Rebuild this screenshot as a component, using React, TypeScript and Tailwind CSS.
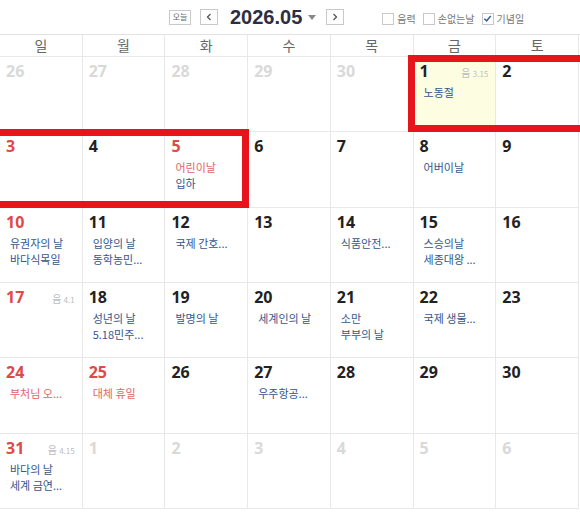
import React from 'react';

type Ev = { t: string; red?: boolean };
type Cell = {
  d: number;
  other?: boolean;
  red?: boolean;
  lunar?: string;
  today?: boolean;
  events?: Ev[];
};

const DAYS = ['일', '월', '화', '수', '목', '금', '토'];

const WEEKS: Cell[][] = [
  [
    { d: 26, other: true },
    { d: 27, other: true },
    { d: 28, other: true },
    { d: 29, other: true },
    { d: 30, other: true },
    { d: 1, lunar: '3.15', today: true, events: [{ t: '노동절' }] },
    { d: 2 },
  ],
  [
    { d: 3, red: true },
    { d: 4 },
    { d: 5, red: true, events: [{ t: '어린이날', red: true }, { t: '입하' }] },
    { d: 6 },
    { d: 7 },
    { d: 8, events: [{ t: '어버이날' }] },
    { d: 9 },
  ],
  [
    { d: 10, red: true, events: [{ t: '유권자의 날' }, { t: '바다식목일' }] },
    { d: 11, events: [{ t: '입양의 날' }, { t: '동학농민...' }] },
    { d: 12, events: [{ t: '국제 간호...' }] },
    { d: 13 },
    { d: 14, events: [{ t: '식품안전...' }] },
    { d: 15, events: [{ t: '스승의날' }, { t: '세종대왕 ...' }] },
    { d: 16 },
  ],
  [
    { d: 17, red: true, lunar: '4.1' },
    { d: 18, events: [{ t: '성년의 날' }, { t: '5.18민주...' }] },
    { d: 19, events: [{ t: '발명의 날' }] },
    { d: 20, events: [{ t: '세계인의 날' }] },
    { d: 21, events: [{ t: '소만' }, { t: '부부의 날' }] },
    { d: 22, events: [{ t: '국제 생물...' }] },
    { d: 23 },
  ],
  [
    { d: 24, red: true, events: [{ t: '부처님 오...', red: true }] },
    { d: 25, red: true, events: [{ t: '대체 휴일', red: true }] },
    { d: 26 },
    { d: 27, events: [{ t: '우주항공...' }] },
    { d: 28 },
    { d: 29 },
    { d: 30 },
  ],
  [
    { d: 31, red: true, lunar: '4.15', events: [{ t: '바다의 날' }, { t: '세계 금연...' }] },
    { d: 1, other: true },
    { d: 2, other: true },
    { d: 3, other: true },
    { d: 4, other: true },
    { d: 5, other: true },
    { d: 6, other: true },
  ],
];

function Check({ checked, label }: { checked?: boolean; label: string }) {
  return (
    <label className="flex items-center gap-[3px] text-[10px] text-[#777]">
      <span className="w-[12px] h-[12px] border border-[#c8c8c8] bg-white flex items-center justify-center">
        {checked && (
          <svg width="9" height="9" viewBox="0 0 10 10">
            <path d="M1.5 5.2 L4 7.6 L8.6 2.2" fill="none" stroke="#2f5f9e" strokeWidth="1.6" />
          </svg>
        )}
      </span>
      {label}
    </label>
  );
}

function DayCell({ c }: { c: Cell }) {
  const numColor = c.other ? 'text-[#d9d9d9]' : c.red ? 'text-[#dd4a4a]' : 'text-[#222]';
  return (
    <div
      className={`border-r border-b border-[#e8e8e8] px-[6px] pt-[3px] overflow-hidden ${
        c.today ? 'bg-[#fdfde2]' : 'bg-white'
      }`}
    >
      <div className="flex items-baseline justify-between">
        <span className={`text-[16px] leading-[22px] font-bold font-['Noto_Sans',sans-serif] ${numColor}`}>
          {c.d}
        </span>
        {c.lunar && (
          <span className="text-[#bdbdbd] text-[10px] pr-[1px]">
            음 <span className="text-[8px]">{c.lunar}</span>
          </span>
        )}
      </div>
      <div className="pl-[4px] mt-[2px]">
        {c.events?.map((e, i) => (
          <div
            key={i}
            className={`text-[11px] leading-[16px] whitespace-nowrap ${
              e.red ? 'text-[#e06464]' : 'text-[#34568c]'
            }`}
          >
            {e.t}
          </div>
        ))}
      </div>
    </div>
  );
}

export default function App() {
  return (
    <div className="relative w-[580px] h-[512px] overflow-hidden bg-white font-['Noto_Sans_CJK_KR','Noto_Sans',sans-serif]">
      <div className="h-[35px] border-b border-[#e2e2e2] flex items-center">
        <div className="ml-[169px] flex items-center">
          <button className="w-[22px] h-[15px] border border-[#c9c9c9] text-[8px] leading-none text-[#666] flex items-center justify-center">
            오늘
          </button>
          <button className="ml-[9px] w-[18px] h-[16px] border border-[#c9c9c9] flex items-center justify-center">
            <svg width="6" height="8" viewBox="0 0 6 8">
              <path d="M4.5 1 L1.5 4 L4.5 7" fill="none" stroke="#555" strokeWidth="1.3" />
            </svg>
          </button>
          <span className="ml-[12px] text-[20px] leading-none font-bold text-[#2b2e45] font-['Liberation_Sans',sans-serif]">
            2026.05
          </span>
          <svg className="ml-[6px]" width="8" height="5" viewBox="0 0 8 5">
            <path d="M0 0 H8 L4 5 Z" fill="#888" />
          </svg>
          <button className="ml-[10px] w-[18px] h-[16px] border border-[#c9c9c9] flex items-center justify-center">
            <svg width="6" height="8" viewBox="0 0 6 8">
              <path d="M1.5 1 L4.5 4 L1.5 7" fill="none" stroke="#555" strokeWidth="1.3" />
            </svg>
          </button>
        </div>
        <div className="ml-[38px] mt-[3px] flex items-center gap-[7px]">
          <Check label="음력" />
          <Check label="손없는날" />
          <Check checked label="기념일" />
        </div>
      </div>

      <div className="w-[579px] grid grid-cols-7 h-[22px]">
        {DAYS.map((d) => (
          <div
            key={d}
            className="border-r border-b border-[#e8e8e8] text-center text-[14px] leading-[21px] text-[#666]"
          >
            {d}
          </div>
        ))}
      </div>

      <div className="w-[579px] grid grid-cols-7 grid-rows-[repeat(6,75.33px)]">
        {WEEKS.flat().map((c, i) => (
          <DayCell key={i} c={c} />
        ))}
      </div>

      <div className="absolute left-[408px] top-[55px] w-[190px] h-[77px] border-[7px] border-[#e8141c]" />
      <div className="absolute left-[-8px] top-[129px] w-[257px] h-[79px] border-[7px] border-[#e8141c]" />
    </div>
  );
}
